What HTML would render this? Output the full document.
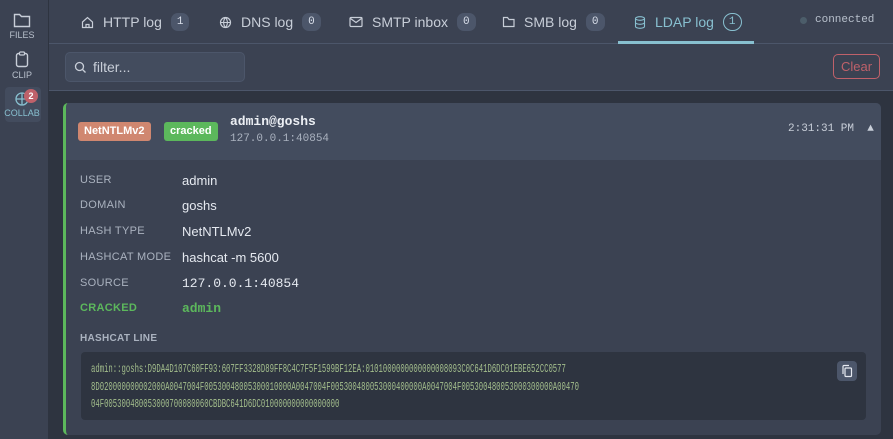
<!DOCTYPE html>
<html><head><meta charset="utf-8"><style>
*{box-sizing:border-box;margin:0;padding:0}
body{width:893px;height:439px;overflow:hidden;background:#2e3440;font-family:"Liberation Sans",sans-serif;position:relative;color:#d8dee9}
.side{position:absolute;left:0;top:0;width:49px;height:439px;background:#3b4252;border-right:1px solid #2e3440}
.si{position:absolute;left:4px;width:36px;text-align:center;font-size:9px;color:#b8c0cc}
.top{position:absolute;left:49px;top:0;right:0;height:44px;background:#3b4252;border-bottom:1px solid #4c566a}
.tab{position:absolute;top:0;height:44px;display:flex;align-items:center;font-size:14px;color:#c8ced8}
.tab svg{margin-right:9px}
.cnt{display:inline-block;margin-left:9px;background:#4c566a;border-radius:7px;font-family:"Liberation Mono",monospace;font-size:11px;padding:3px 6px;color:#d8dee9}
.bar{position:absolute;left:49px;top:44px;right:0;height:47px;background:#3b4252;border-bottom:1px solid #4c566a}
.card{position:absolute;left:63px;top:103px;width:818px;height:332px;background:#3b4252;border-left:3px solid #5cb85c;border-radius:5px;overflow:hidden}
.hdr{height:57px;background:#434c5e;position:relative}
.badge{position:absolute;top:19px;height:19px;border-radius:3px;font-size:11px;font-weight:bold;color:#fff;line-height:19px;padding:0 6px}
.row{position:absolute;left:14px;font-size:11px;color:#aab2bf;letter-spacing:.3px}
.val{position:absolute;left:116px;font-size:13px;color:#e5e9f0}
.mono{font-family:"Liberation Mono",monospace}
.code{position:absolute;left:15px;top:249px;width:785px;height:68px;background:#2e3440;border-radius:4px}
.code .t{position:absolute;left:10px;top:9px;white-space:nowrap;font-family:"Liberation Mono",monospace;font-size:12px;line-height:17.5px;color:#a3be8c;transform:scaleX(.605);transform-origin:0 0}
</style></head><body>
<div class="side">
 <div class="si" style="top:12px"><svg width="18" height="16" viewBox="0 0 18 16"><path d="M1.5 2.5h5l2 2h8v10h-15z" fill="none" stroke="#c8ced8" stroke-width="1.4"/></svg><div>FILES</div></div>
 <div class="si" style="top:51px"><svg width="14" height="17" viewBox="0 0 14 17"><rect x="1.5" y="2.5" width="11" height="13" rx="2" fill="none" stroke="#c8ced8" stroke-width="1.4"/><rect x="4.5" y="1" width="5" height="3" rx="1" fill="#3b4252" stroke="#c8ced8" stroke-width="1.2"/></svg><div>CLIP</div></div>
 <div style="position:absolute;left:5px;top:87px;width:36px;height:35px;background:#434c5e;border-radius:4px"></div>
 <div class="si" style="top:90px;color:#88c0d0"><svg width="16" height="16" viewBox="0 0 16 16"><circle cx="8" cy="9" r="6" fill="none" stroke="#88c0d0" stroke-width="1.3"/><path d="M8 3v12M2 9h12" stroke="#88c0d0" stroke-width="1.3"/></svg><div>COLLAB</div></div>
 <div style="position:absolute;left:24px;top:89px;width:14px;height:14px;border-radius:7px;background:#bf616a;color:#fff;font-size:9px;font-weight:bold;text-align:center;line-height:14px">2</div>
</div>
<div class="top">
 <div class="tab" style="left:32px"><svg width="13" height="13" viewBox="0 0 13 13"><path d="M1.5 6L6.5 1.5 11.5 6v5.5h-10zM5 11.5v-3h3v3" fill="none" stroke="#c8ced8" stroke-width="1.2"/></svg>HTTP log<span class="cnt">1</span></div>
 <div class="tab" style="left:170px"><svg width="13" height="13" viewBox="0 0 13 13"><circle cx="6.5" cy="6.5" r="5" fill="none" stroke="#c8ced8" stroke-width="1.2"/><path d="M1.5 6.5h10M6.5 1.5c-2.5 3-2.5 7 0 10M6.5 1.5c2.5 3 2.5 7 0 10" fill="none" stroke="#c8ced8" stroke-width="1.1"/></svg>DNS log<span class="cnt">0</span></div>
 <div class="tab" style="left:300px"><svg width="14" height="12" viewBox="0 0 14 12"><rect x="1" y="1.5" width="12" height="9" rx="1" fill="none" stroke="#c8ced8" stroke-width="1.2"/><path d="M1.5 2.5l5.5 4 5.5-4" fill="none" stroke="#c8ced8" stroke-width="1.2"/></svg>SMTP inbox<span class="cnt">0</span></div>
 <div class="tab" style="left:453px"><svg width="13" height="12" viewBox="0 0 13 12"><path d="M1.5 1.5h4l1.5 2h5v7h-10.5z" fill="none" stroke="#c8ced8" stroke-width="1.2"/></svg>SMB log<span class="cnt">0</span></div>
 <div class="tab" style="left:585px;color:#88c0d0"><svg width="12" height="13" viewBox="0 0 12 13"><ellipse cx="6" cy="2.5" rx="4.5" ry="1.8" fill="none" stroke="#88c0d0" stroke-width="1.1"/><path d="M1.5 2.5v8c0 1 2 1.8 4.5 1.8s4.5-.8 4.5-1.8v-8M1.5 6.5c0 1 2 1.8 4.5 1.8s4.5-.8 4.5-1.8" fill="none" stroke="#88c0d0" stroke-width="1.1"/></svg>LDAP log<span class="cnt" style="background:none;border:1px solid #88c0d0;color:#88c0d0;border-radius:9px;padding:2px 5px">1</span></div>
 <div style="position:absolute;left:569px;top:41px;width:136px;height:3px;background:#88c0d0"></div>
 <div style="position:absolute;left:751px;top:17px;width:7px;height:7px;border-radius:4px;background:#4c5d6a"></div>
 <div class="mono" style="position:absolute;left:766px;top:14px;font-size:11px;color:#b8c0cc">connected</div>
</div>
<div class="bar">
 <div style="position:absolute;left:16px;top:8px;width:180px;height:30px;background:#434c5e;border:1px solid #4c566a;border-radius:5px"><svg style="position:absolute;left:8px;top:8px" width="13" height="13" viewBox="0 0 13 13"><circle cx="5.5" cy="5.5" r="4" fill="none" stroke="#c8ced8" stroke-width="1.3"/><path d="M8.5 8.5l3 3" stroke="#c8ced8" stroke-width="1.3"/></svg><span style="position:absolute;left:27px;top:6px;font-size:14px;color:#c8ced8">filter...</span></div>
 <div style="position:absolute;left:784px;top:10px;width:47px;height:25px;border:1px solid #bf616a;border-radius:5px;color:#bf616a;font-size:13px;text-align:center;line-height:23px">Clear</div>
</div>
<div class="card">
 <div class="hdr">
  <div class="badge" style="left:12px;background:#d08770">NetNTLMv2</div>
  <div class="badge" style="left:98px;background:#5cb85c">cracked</div>
  <div class="mono" style="position:absolute;left:164px;top:11px;font-size:13px;font-weight:bold;color:#eceff4">admin@goshs</div>
  <div class="mono" style="position:absolute;left:164px;top:30px;font-size:11px;color:#aab2bf">127.0.0.1:40854</div>
  <div class="mono" style="position:absolute;left:722px;top:20px;font-size:11px;color:#c8ced8">2:31:31 PM &nbsp;▲</div>
 </div>
 <div class="row" style="top:71px">USER</div><div class="val" style="top:70px">admin</div>
 <div class="row" style="top:96px">DOMAIN</div><div class="val" style="top:95px">goshs</div>
 <div class="row" style="top:122px">HASH TYPE</div><div class="val" style="top:121px">NetNTLMv2</div>
 <div class="row" style="top:148px">HASHCAT MODE</div><div class="val" style="top:147px">hashcat -m 5600</div>
 <div class="row" style="top:174px">SOURCE</div><div class="val mono" style="top:173px">127.0.0.1:40854</div>
 <div class="row" style="top:199px;color:#5cb85c;font-weight:bold">CRACKED</div><div class="val mono" style="top:198px;color:#5cb85c;font-weight:bold">admin</div>
 <div class="row" style="top:230px;font-size:10px;font-weight:bold;color:#aab2bf">HASHCAT LINE</div>
 <div class="code"><div class="t">admin::goshs:D9DA4D107C60FF93:607FF3328D89FF8C4C7F5F1599BF12EA:0101000000000000008093C0C641D6DC01EBE652CC0577<br>8D020000000002000A0047004F00530048005300010000A0047004F005300480053000400000A0047004F005300480053000300000A00470<br>04F005300480053000700080060CBDBC641D6DC010000000000000000</div>
  <div style="position:absolute;right:9px;top:9px;width:20px;height:20px;background:#4c566a;border-radius:4px"><svg style="position:absolute;left:4px;top:3px" width="12" height="14" viewBox="0 0 12 14"><rect x="4" y="4" width="6.5" height="8.5" rx="1" fill="none" stroke="#e5e9f0" stroke-width="1.2"/><path d="M2 10V2.5a1 1 0 0 1 1-1h5" fill="none" stroke="#e5e9f0" stroke-width="1.2"/></svg></div>
 </div>
</div>
</body></html>
